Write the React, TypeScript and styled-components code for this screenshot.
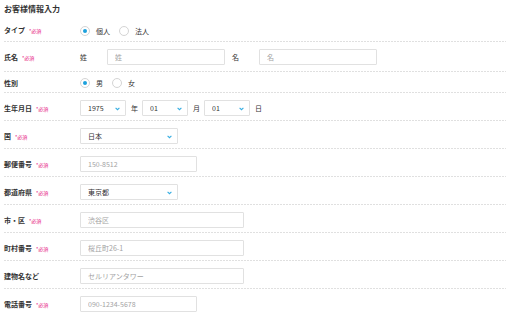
import React from 'react';
import styled, { createGlobalStyle } from 'styled-components';

const GlobalStyle = createGlobalStyle`
    body {
        margin: 0;
        background: #fff;
        font-family: "Noto Sans CJK JP", "Noto Sans", sans-serif;
        color: #333;
    }
`;

const Form = styled.form`
    width: 502px;
    padding: 0 8px 0 4px;
`;

const Title = styled.h2`
    margin: 0;
    padding-top: 3px;
    height: 17px;
    font-size: 8px;
    line-height: 11px;
    font-weight: 700;
    color: #333;
`;

// dotted divider drawn as a fine repeating gradient, the css dashed border is too coarse
const Row = styled.div<{ $pad?: string; $last?: boolean }>`
    display: grid;
    grid-template-columns: 76px 1fr;
    align-items: center;
    padding: ${(p) => p.$pad || '6px 0 5px'};
    padding-bottom: ${(p) => (p.$last ? '0' : '')};
    background-image: ${(p) =>
        p.$last
            ? 'none'
            : 'repeating-linear-gradient(to right, #e0e0e0 0 2px, transparent 2px 3px)'};
    background-repeat: no-repeat;
    background-size: 100% 1px;
    background-position: left bottom;
    border-bottom: 1px solid transparent;
`;

const Label = styled.div`
    display: flex;
    align-items: baseline;
    gap: 4px;
    font-size: 7px;
    font-weight: 700;
    line-height: 10px;
    color: #333;
`;

const Required = styled.span`
    font-size: 5px;
    font-weight: 400;
    color: #e6197f;
`;

const Controls = styled.div`
    display: flex;
    align-items: center;
    font-size: 7px;
    line-height: 10px;
`;

const RadioGroup = styled.label`
    display: flex;
    align-items: center;
    gap: 6px;
    margin-right: 9px;
    font-size: 7px;
    color: #333;
`;

const Radio = styled.input.attrs({ type: 'radio' })`
    appearance: none;
    margin: 0;
    width: 10px;
    height: 10px;
    border: 1px solid #d4d4d4;
    border-radius: 50%;
    background: #fff;
    display: grid;
    place-items: center;
    box-sizing: border-box;

    &:checked::after {
        content: '';
        width: 4px;
        height: 4px;
        border-radius: 50%;
        background: #1da1dc;
    }
`;

const TextField = styled.input<{ $w: number }>`
    box-sizing: border-box;
    width: ${(p) => p.$w}px;
    height: 16px;
    margin: 0;
    padding: 0 7px;
    border: 1px solid #e1e1e1;
    border-radius: 1px;
    font-family: inherit;
    font-size: 7px;
    color: #333;
    outline: none;

    &::placeholder {
        color: #a3a3a3;
    }
`;

const SelectWrap = styled.div<{ $w: number }>`
    position: relative;
    width: ${(p) => p.$w}px;
    height: 16px;
`;

const Select = styled.select`
    box-sizing: border-box;
    appearance: none;
    width: 100%;
    height: 100%;
    margin: 0;
    padding: 0 7px;
    border: 1px solid #e1e1e1;
    border-radius: 1px;
    background: #fff;
    font-family: inherit;
    font-size: 7px;
    color: #333;
    outline: none;
`;

const Chevron = styled.svg`
    position: absolute;
    right: 6px;
    top: 7px;
    pointer-events: none;
`;

const Unit = styled.span<{ $before?: number; $after?: number }>`
    margin-left: ${(p) => p.$before ?? 0}px;
    margin-right: ${(p) => p.$after ?? 0}px;
    font-size: 7px;
    color: #333;
`;

type DropdownProps = { width: number; value: string };

const Dropdown = ({ width, value }: DropdownProps) => (
    <SelectWrap $w={width}>
        <Select defaultValue={value}>
            <option value={value}>{value}</option>
        </Select>
        <Chevron width="5" height="4" viewBox="0 0 5 4">
            <path d="M0.6 0.8 L2.5 2.7 L4.4 0.8" fill="none" stroke="#35ade2" strokeWidth="1.1" />
        </Chevron>
    </SelectWrap>
);

const FieldLabel = ({ text, required }: { text: string; required?: boolean }) => (
    <Label>
        {text}
        {required && <Required>*必須</Required>}
    </Label>
);

export default function App() {
    return (
        <>
            <GlobalStyle />
            <Form>
                <Title>お客様情報入力</Title>

                <Row $pad="5px 0 6px">
                    <FieldLabel text="タイプ" required />
                    <Controls>
                        <RadioGroup>
                            <Radio name="type" defaultChecked />
                            個人
                        </RadioGroup>
                        <RadioGroup>
                            <Radio name="type" />
                            法人
                        </RadioGroup>
                    </Controls>
                </Row>

                <Row $pad="6px 0 7px">
                    <FieldLabel text="氏名" required />
                    <Controls>
                        <Unit $after={20}>姓</Unit>
                        <TextField $w={118} placeholder="姓" />
                        <Unit $before={7} $after={20}>名</Unit>
                        <TextField $w={118} placeholder="名" />
                    </Controls>
                </Row>

                <Row $pad="5px 0 5px">
                    <FieldLabel text="性別" />
                    <Controls>
                        <RadioGroup>
                            <Radio name="sex" defaultChecked />
                            男
                        </RadioGroup>
                        <RadioGroup>
                            <Radio name="sex" />
                            女
                        </RadioGroup>
                    </Controls>
                </Row>

                <Row>
                    <FieldLabel text="生年月日" required />
                    <Controls>
                        <Dropdown width={46} value="1975" />
                        <Unit $before={5} $after={4}>年</Unit>
                        <Dropdown width={46} value="01" />
                        <Unit $before={5} $after={4}>月</Unit>
                        <Dropdown width={46} value="01" />
                        <Unit $before={5}>日</Unit>
                    </Controls>
                </Row>

                <Row>
                    <FieldLabel text="国" required />
                    <Controls>
                        <Dropdown width={98} value="日本" />
                    </Controls>
                </Row>

                <Row>
                    <FieldLabel text="郵便番号" required />
                    <Controls>
                        <TextField $w={117} placeholder="150-8512" />
                    </Controls>
                </Row>

                <Row>
                    <FieldLabel text="都道府県" required />
                    <Controls>
                        <Dropdown width={98} value="東京都" />
                    </Controls>
                </Row>

                <Row>
                    <FieldLabel text="市・区" required />
                    <Controls>
                        <TextField $w={164} placeholder="渋谷区" />
                    </Controls>
                </Row>

                <Row>
                    <FieldLabel text="町村番号" required />
                    <Controls>
                        <TextField $w={164} placeholder="桜丘町26-1" />
                    </Controls>
                </Row>

                <Row>
                    <FieldLabel text="建物名など" />
                    <Controls>
                        <TextField $w={164} placeholder="セルリアンタワー" />
                    </Controls>
                </Row>

                <Row $last>
                    <FieldLabel text="電話番号" required />
                    <Controls>
                        <TextField $w={117} placeholder="090-1234-5678" />
                    </Controls>
                </Row>
            </Form>
        </>
    );
}
